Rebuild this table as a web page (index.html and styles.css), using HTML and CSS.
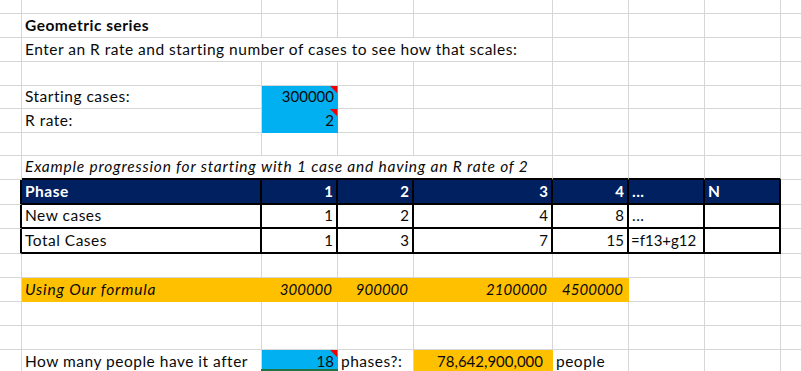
FILE: index.html
```html
<!DOCTYPE html>
<html lang="en">
<head>
<meta charset="utf-8">
<title>Geometric series</title>
<link rel="stylesheet" href="styles.css">
</head>
<body>
<div class="sheet">
  <!-- row 1 -->
  <div class="c"></div><div class="c"></div><div class="c"></div><div class="c"></div><div class="c"></div><div class="c"></div><div class="c"></div><div class="c"></div><div class="c"></div>
  <!-- row 2 -->
  <div class="c"></div><div class="c b">Geometric series</div><div class="c"></div><div class="c"></div><div class="c"></div><div class="c"></div><div class="c"></div><div class="c"></div><div class="c"></div>
  <!-- row 3 -->
  <div class="c"></div><div class="c span4">Enter an R rate and starting number of cases to see how that scales:</div><div class="c"></div><div class="c"></div><div class="c"></div><div class="c"></div>
  <!-- row 4 -->
  <div class="c"></div><div class="c"></div><div class="c"></div><div class="c"></div><div class="c"></div><div class="c"></div><div class="c"></div><div class="c"></div><div class="c"></div>
  <!-- row 5 -->
  <div class="c"></div><div class="c">Starting cases:</div><div class="c r input note">300000</div><div class="c"></div><div class="c"></div><div class="c"></div><div class="c"></div><div class="c"></div><div class="c"></div>
  <!-- row 6 -->
  <div class="c"></div><div class="c">R rate:</div><div class="c r input note">2</div><div class="c"></div><div class="c"></div><div class="c"></div><div class="c"></div><div class="c"></div><div class="c"></div>
  <!-- row 7 -->
  <div class="c"></div><div class="c"></div><div class="c"></div><div class="c"></div><div class="c"></div><div class="c"></div><div class="c"></div><div class="c"></div><div class="c"></div>
  <!-- row 8 -->
  <div class="c"></div><div class="c i span4 above">Example progression for starting with 1 case and having an R rate of 2</div><div class="c above"></div><div class="c above"></div><div class="c above"></div><div class="c"></div>
  <!-- row 9: table header -->
  <div class="c left"></div><div class="c t th">Phase</div><div class="c t th r">1</div><div class="c t th r">2</div><div class="c t th r">3</div><div class="c t th r">4</div><div class="c t th">...</div><div class="c t th">N</div><div class="c"></div>
  <!-- row 10 -->
  <div class="c left"></div><div class="c t">New cases</div><div class="c t r">1</div><div class="c t r">2</div><div class="c t r">4</div><div class="c t r">8</div><div class="c t">...</div><div class="c t"></div><div class="c"></div>
  <!-- row 11 -->
  <div class="c left"></div><div class="c t">Total Cases</div><div class="c t r">1</div><div class="c t r">3</div><div class="c t r">7</div><div class="c t r">15</div><div class="c t formula">=f13+g12</div><div class="c t"></div><div class="c"></div>
  <!-- row 12 -->
  <div class="c"></div><div class="c"></div><div class="c"></div><div class="c"></div><div class="c"></div><div class="c"></div><div class="c"></div><div class="c"></div><div class="c"></div>
  <!-- row 13 -->
  <div class="c"></div><div class="c hl i">Using Our formula</div><div class="c hl i r">300000</div><div class="c hl i r">900000</div><div class="c hl i r">2100000</div><div class="c hl i r">4500000</div><div class="c"></div><div class="c"></div><div class="c"></div>
  <!-- row 14 -->
  <div class="c"></div><div class="c"></div><div class="c"></div><div class="c"></div><div class="c"></div><div class="c"></div><div class="c"></div><div class="c"></div><div class="c"></div>
  <!-- row 15 -->
  <div class="c"></div><div class="c"></div><div class="c"></div><div class="c"></div><div class="c"></div><div class="c"></div><div class="c"></div><div class="c"></div><div class="c"></div>
  <!-- row 16 -->
  <div class="c"></div><div class="c">How many people have it after</div><div class="c r input note selected">18</div><div class="c">phases?:</div><div class="c hl r total">78,642,900,000</div><div class="c">people</div><div class="c"></div><div class="c"></div><div class="c"></div>
</div>
</body>
</html>
```

FILE: styles.css
```css
* { box-sizing: border-box; }

html, body {
  margin: 0;
  padding: 0;
  background: #fff;
}

body {
  font-family: Lato, "Liberation Sans", sans-serif;
  font-size: 15.5px;
  letter-spacing: 0.5px;
  color: #0a0a0a;
  overflow: hidden;
}

.sheet {
  display: grid;
  grid-template-columns: 22px 240px 76px 76px 139px 76px 76px 76px 1fr;
  grid-template-rows: 14px 24px 24px 24px 23px 24px 23px 24px 25px 24px 25px 24px 24px 24px 24px 24px;
  width: 802px;
}

.c {
  position: relative;
  display: flex;
  align-items: flex-end;
  padding: 0 3px 2px 3px;
  line-height: 19px;
  white-space: nowrap;
  border-right: 1px solid #d6d6d6;
  border-bottom: 1px solid #d6d6d6;
}

.span4 { grid-column: span 4; }

.b { font-weight: 700; }
.i { font-style: italic; letter-spacing: 0.8px; }
.r {
  justify-content: flex-end;
  font-size: 15px;
  letter-spacing: 0;
}

.formula {
  padding-left: 2px;
  font-size: 15px;
  letter-spacing: 0;
}

.input {
  background: #00b0f0;
  border-right-color: #00b0f0;
  border-bottom-color: #00b0f0;
}

.note::after {
  content: "";
  position: absolute;
  top: 0;
  right: 0;
  width: 0;
  height: 0;
  border-top: 7px solid #f00000;
  border-left: 7px solid transparent;
}

.selected::before {
  content: "";
  position: absolute;
  left: -1px;
  right: -1px;
  top: 19px;
  height: 2px;
  background: #217346;
}

.above { border-bottom: 2px solid #000; }
.left { border-right: 2px solid #000; }

.t {
  border-right: 2px solid #000;
  border-bottom: 2px solid #000;
  padding-bottom: 2px;
}

.th {
  background: #002060;
  color: #fff;
  font-weight: 700;
}

.hl {
  background: #ffc000;
  border-right-color: #ffc000;
  border-bottom-color: #ffc000;
}

.hl.i.r { padding-right: 5px; }

.total { padding-right: 9px; }
```
